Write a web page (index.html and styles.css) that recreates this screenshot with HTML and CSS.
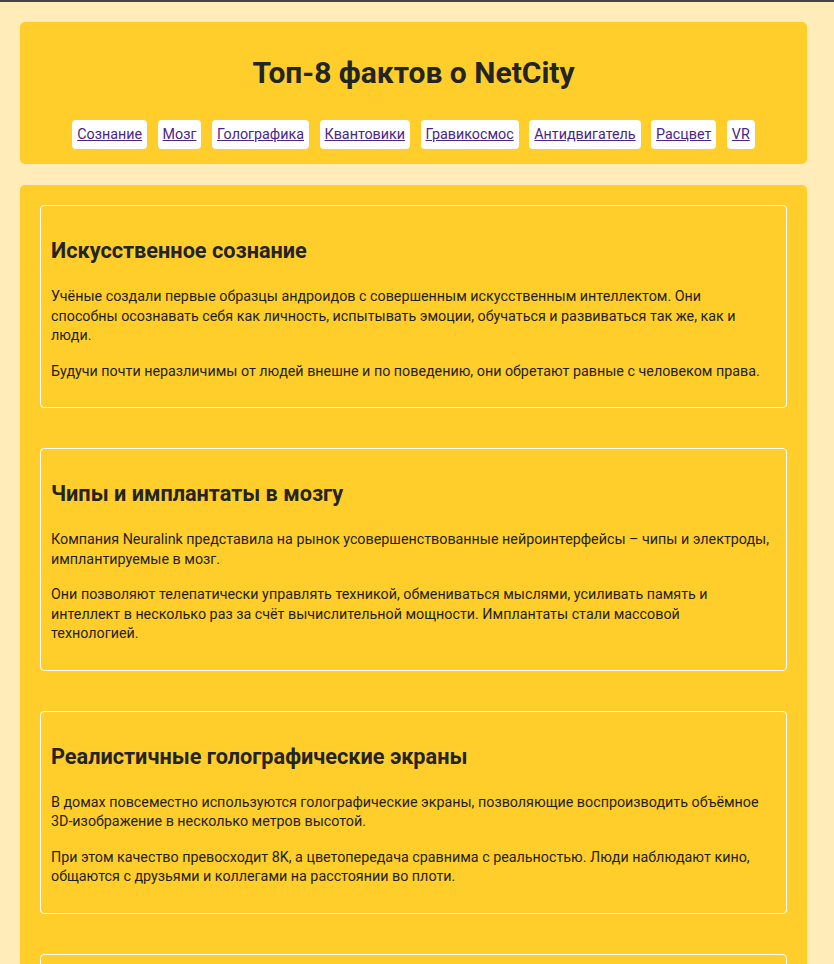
FILE: index.html
```html
<!DOCTYPE html>
<html lang="ru">
<head>
<meta charset="utf-8">
<title>Топ-8 фактов о NetCity</title>
<link rel="stylesheet" href="styles.css">
</head>
<body>
<div class="topline"></div>
<div class="page">
  <header class="header">
    <h1 class="title">Топ-8 фактов о NetCity</h1>
    <nav class="nav">
      <a class="nav-link" href="#a1">Сознание</a>
      <a class="nav-link" href="#a2">Мозг</a>
      <a class="nav-link" href="#a3">Голографика</a>
      <a class="nav-link" href="#a4">Квантовики</a>
      <a class="nav-link" href="#a5">Гравикосмос</a>
      <a class="nav-link" href="#a6">Антидвигатель</a>
      <a class="nav-link" href="#a7">Расцвет</a>
      <a class="nav-link" href="#a8">VR</a>
    </nav>
  </header>
  <main class="main">
    <article class="fact" id="a1">
      <h2 class="fact-title">Искусственное сознание</h2>
      <p class="fact-text">Учёные создали первые образцы андроидов с совершенным искусственным интеллектом. Они<br>способны осознавать себя как личность, испытывать эмоции, обучаться и развиваться так же, как и<br>люди.</p>
      <p class="fact-text">Будучи почти неразличимы от людей внешне и по поведению, они обретают равные с человеком права.</p>
    </article>
    <article class="fact" id="a2">
      <h2 class="fact-title">Чипы и имплантаты в мозгу</h2>
      <p class="fact-text">Компания Neuralink представила на рынок усовершенствованные нейроинтерфейсы – чипы и электроды, имплантируемые в мозг.</p>
      <p class="fact-text">Они позволяют телепатически управлять техникой, обмениваться мыслями, усиливать память и интеллект в несколько раз за счёт вычислительной мощности. Имплантаты стали массовой<br>технологией.</p>
    </article>
    <article class="fact" id="a3">
      <h2 class="fact-title">Реалистичные голографические экраны</h2>
      <p class="fact-text">В домах повсеместно используются голографические экраны, позволяющие воспроизводить объёмное 3D-изображение в несколько метров высотой.</p>
      <p class="fact-text">При этом качество превосходит 8K, а цветопередача сравнима с реальностью. Люди наблюдают кино, общаются с друзьями и коллегами на расстоянии во плоти.</p>
    </article>
    <article class="fact" id="a4">
      <h2 class="fact-title">Квантовые компьютеры</h2>
      <p class="fact-text">Квантовые вычисления стали доступны каждому.</p>
    </article>
  </main>
</div>
</body>
</html>
```
FILE: styles.css
```css
html, body {
  margin: 0;
  padding: 0;
}
body {
  background: #ffecb8;
  color: #1f1f1f;
  font-family: Roboto, "Noto Sans", sans-serif;
  font-size: 14.3px;
  line-height: 19.5px;
}
.topline {
  height: 2px;
  background: #454545;
}
.page {
  padding: 20px 27px 0 20px;
}
.header {
  background: #ffce2a;
  border-radius: 5px;
  padding: 33px 10px 15px;
  text-align: center;
}
.title {
  margin: 0 0 29px;
  font-size: 30px;
  font-weight: 700;
  line-height: 36px;
  color: #242424;
}
.nav {
  display: flex;
  justify-content: center;
  flex-wrap: wrap;
  gap: 10.5px;
}
.nav-link {
  background: #fff;
  border-radius: 4px;
  padding: 5px 5px;
  color: #4a2587;
  font-size: 14.3px;
  line-height: 19px;
}
.main {
  margin-top: 21px;
  background: #ffce2a;
  border-radius: 5px 5px 0 0;
  padding: 20px 20px 0;
  display: flex;
  flex-direction: column;
  gap: 40px;
}
.fact {
  border: 1px solid #fff;
  border-radius: 4px;
  padding: 10px 10px;
}
.fact-title {
  margin: 22px 0 23px;
  font-size: 21.7px;
  font-weight: 700;
  line-height: 26px;
  color: #242424;
}
.fact-text {
  margin: 16px 0;
}
```
